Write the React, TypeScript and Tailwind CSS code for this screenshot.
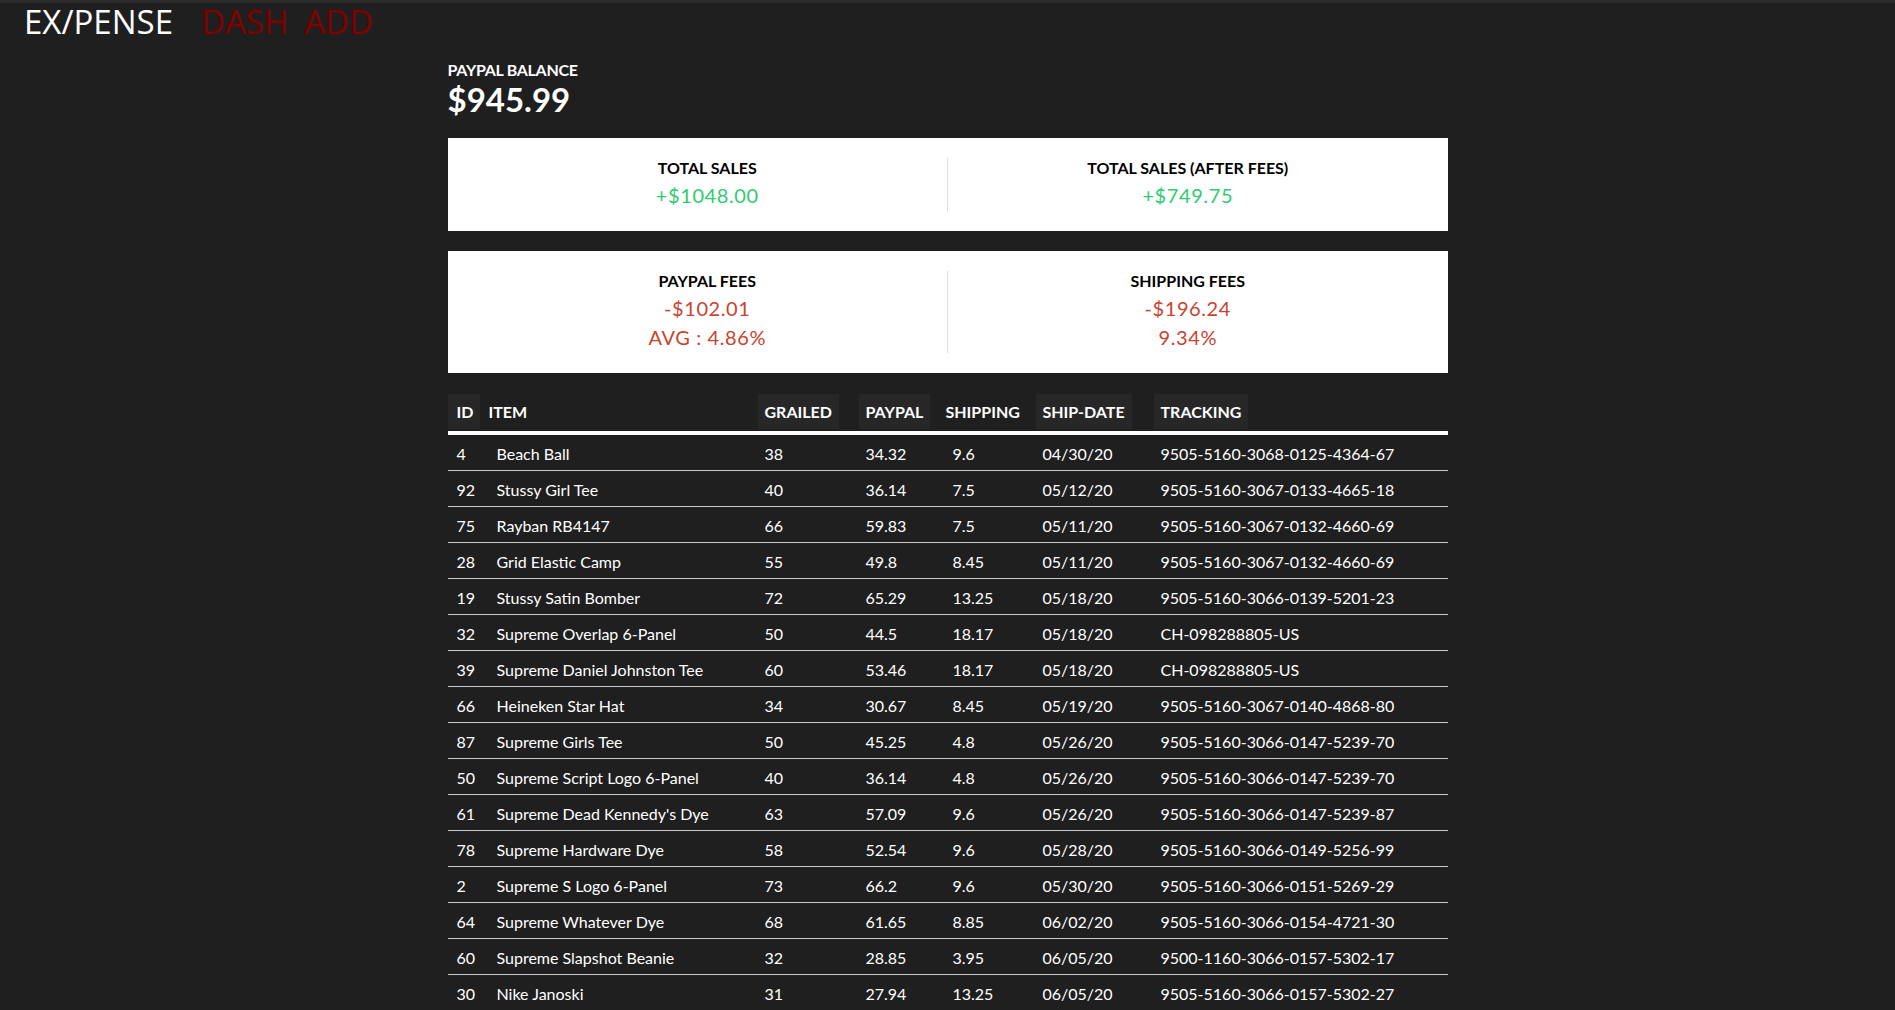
const rows: [string, string, string, string, string, string, string][] = [
  ["4", "Beach Ball", "38", "34.32", "9.6", "04/30/20", "9505-5160-3068-0125-4364-67"],
  ["92", "Stussy Girl Tee", "40", "36.14", "7.5", "05/12/20", "9505-5160-3067-0133-4665-18"],
  ["75", "Rayban RB4147", "66", "59.83", "7.5", "05/11/20", "9505-5160-3067-0132-4660-69"],
  ["28", "Grid Elastic Camp", "55", "49.8", "8.45", "05/11/20", "9505-5160-3067-0132-4660-69"],
  ["19", "Stussy Satin Bomber", "72", "65.29", "13.25", "05/18/20", "9505-5160-3066-0139-5201-23"],
  ["32", "Supreme Overlap 6-Panel", "50", "44.5", "18.17", "05/18/20", "CH-098288805-US"],
  ["39", "Supreme Daniel Johnston Tee", "60", "53.46", "18.17", "05/18/20", "CH-098288805-US"],
  ["66", "Heineken Star Hat", "34", "30.67", "8.45", "05/19/20", "9505-5160-3067-0140-4868-80"],
  ["87", "Supreme Girls Tee", "50", "45.25", "4.8", "05/26/20", "9505-5160-3066-0147-5239-70"],
  ["50", "Supreme Script Logo 6-Panel", "40", "36.14", "4.8", "05/26/20", "9505-5160-3066-0147-5239-70"],
  ["61", "Supreme Dead Kennedy's Dye", "63", "57.09", "9.6", "05/26/20", "9505-5160-3066-0147-5239-87"],
  ["78", "Supreme Hardware Dye", "58", "52.54", "9.6", "05/28/20", "9505-5160-3066-0149-5256-99"],
  ["2", "Supreme S Logo 6-Panel", "73", "66.2", "9.6", "05/30/20", "9505-5160-3066-0151-5269-29"],
  ["64", "Supreme Whatever Dye", "68", "61.65", "8.85", "06/02/20", "9505-5160-3066-0154-4721-30"],
  ["60", "Supreme Slapshot Beanie", "32", "28.85", "3.95", "06/05/20", "9500-1160-3066-0157-5302-17"],
  ["30", "Nike Janoski", "31", "27.94", "13.25", "06/05/20", "9505-5160-3066-0157-5302-27"],
];

// column grid shared by head and body
const grid = "grid grid-cols-[33px_277px_101px_80px_97px_118px_1fr]";

const headers = [
  { label: "ID", cls: "bg-[#272727] pl-[9px] pr-[7px]" },
  { label: "ITEM", cls: "pl-[8px]" },
  { label: "GRAILED", cls: "bg-[#272727] px-[7px]" },
  { label: "PAYPAL", cls: "bg-[#272727] px-[7px]" },
  { label: "SHIPPING", cls: "pl-[7px]" },
  { label: "SHIP-DATE", cls: "bg-[#272727] px-[7px]" },
  { label: "TRACKING", cls: "bg-[#272727] px-[7px]" },
];

const bodyPad = ["pl-[9px]", "pl-[16px]", "pl-[7px]", "pl-[7px]", "pl-[14px]", "pl-[7px]", "pl-[7px]"];

function StatCol({
  title,
  lines,
  color,
  divider,
}: {
  title: string;
  lines: string[];
  color: string;
  divider?: boolean;
}) {
  return (
    <div
      className={`flex flex-1 flex-col items-center ${divider ? "border-l border-[#dddddd]" : ""}`}
    >
      <div className="mt-[2px] text-[16px] font-bold leading-[16px] text-black">{title}</div>
      {lines.map((line) => (
        <div key={line} className={`mt-[9px] text-[20px] leading-[20px] tracking-[0.6px] ${color}`}>
          {line}
        </div>
      ))}
      <div className="h-[6px]" />
    </div>
  );
}

export default function App() {
  return (
    <div className="h-[1010px] overflow-hidden bg-[#1f1f1f] font-['Lato',sans-serif] text-white">
      <div className="h-[3px] bg-[#2c2c2c]" />
      <nav className="mt-[3px] flex pl-[24px] font-['Open_Sans',sans-serif] text-[33px] leading-[32px]">
        <span className="text-white">EX/PENSE</span>
        <a className="ml-[28px] text-[#800000]">DASH</a>
        <a className="ml-[16px] text-[#800000]">ADD</a>
      </nav>

      <main className="mx-auto mt-[24px] w-[1000px]">
        <p className="text-[16px] font-bold leading-[16px] tracking-[-0.3px]">PAYPAL BALANCE</p>
        <p className="mt-[4px] text-[33px] font-bold leading-[34px]">$945.99</p>

        <section className="mt-[22px] flex bg-white px-[20px] py-[20px]">
          <StatCol title="TOTAL SALES" lines={["+$1048.00"]} color="text-[#2ecc71]" />
          <StatCol title="TOTAL SALES (AFTER FEES)" lines={["+$749.75"]} color="text-[#2ecc71]" divider />
        </section>

        <section className="mt-[20px] flex bg-white px-[20px] py-[20px]">
          <StatCol title="PAYPAL FEES" lines={["-$102.01", "AVG : 4.86%"]} color="text-[#c9432f]" />
          <StatCol title="SHIPPING FEES" lines={["-$196.24", "9.34%"]} color="text-[#c9432f]" divider />
        </section>

        <div className="mt-[21px]">
          <div className={grid}>
            {headers.map((h) => (
              <div key={h.label} className="flex">
                <span className={`flex h-[35px] items-center text-[16px] font-bold ${h.cls}`}>
                  {h.label}
                </span>
              </div>
            ))}
          </div>
          <div className="mt-[2px] h-[4px] bg-white" />
          {rows.map((row, i) => (
            <div key={i} className={`${grid} h-[36px] border-b border-[#cccccc] pt-[2px] text-[16px]`}>
              {row.map((cell, j) => (
                <div key={j} className={`flex items-center whitespace-nowrap ${bodyPad[j]}`}>
                  {cell}
                </div>
              ))}
            </div>
          ))}
        </div>
      </main>
    </div>
  );
}
